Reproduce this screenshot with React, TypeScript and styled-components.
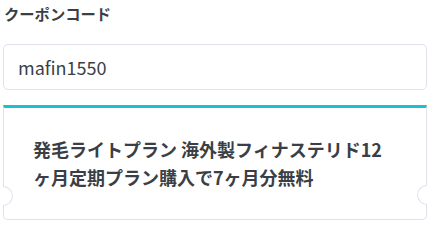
import styled, { createGlobalStyle } from "styled-components";

const GlobalStyle = createGlobalStyle`
  body {
    margin: 0;
    background: #ffffff;
    font-family: "Noto Sans CJK JP", "Noto Sans", sans-serif;
  }
`;

const Wrap = styled.div`
  width: 424px;
  padding: 2px 11px 0 3px;
  display: flex;
  flex-direction: column;
`;

const Label = styled.div`
  padding-left: 1px;
  font-size: 15.3px;
  line-height: 22px;
  font-weight: 700;
  color: #3a3f47;
`;

const Input = styled.input`
  margin-top: 20px;
  box-sizing: border-box;
  width: 424px;
  height: 46px;
  padding: 0 14px;
  border: 1px solid #e2e0ec;
  border-radius: 5px;
  font-family: "Noto Sans CJK JP", "Noto Sans", sans-serif;
  font-size: 18px;
  color: #3a3f47;
  outline: none;
`;

const Coupon = styled.div`
  position: relative;
  box-sizing: border-box;
  width: 424px;
  margin-top: 15px;
  padding: 27px 28px 28px 29px;
  border: 1px solid #e2e0ec;
  border-top: 3px solid #1cc2cb;
  border-radius: 0 0 5px 5px;
`;

const CouponText = styled.p`
  margin: 0;
  font-size: 18px;
  line-height: 28px;
  font-weight: 700;
  color: #3a3f47;
`;

const Notch = styled.span<{ $side: "left" | "right"; $top: number }>`
  position: absolute;
  top: ${(p) => p.$top}px;
  ${(p) => p.$side}: -1px;
  width: 9px;
  height: 18px;
  background: #ffffff;
  border: 1px solid #e2e0ec;
  border-${(p) => p.$side}: none;
  border-radius: ${(p) => (p.$side === "left" ? "0 10px 10px 0" : "10px 0 0 10px")};
`;

export default function App() {
  return (
    <>
      <GlobalStyle />
      <Wrap>
        <Label>クーポンコード</Label>
        <Input defaultValue="mafin1550" />
        <Coupon>
          <CouponText>
            発毛ライトプラン 海外製フィナステリド12ヶ月定期プラン購入で7ヶ月分無料
          </CouponText>
          <Notch $side="left" $top={78} />
          <Notch $side="right" $top={77} />
        </Coupon>
      </Wrap>
    </>
  );
}
